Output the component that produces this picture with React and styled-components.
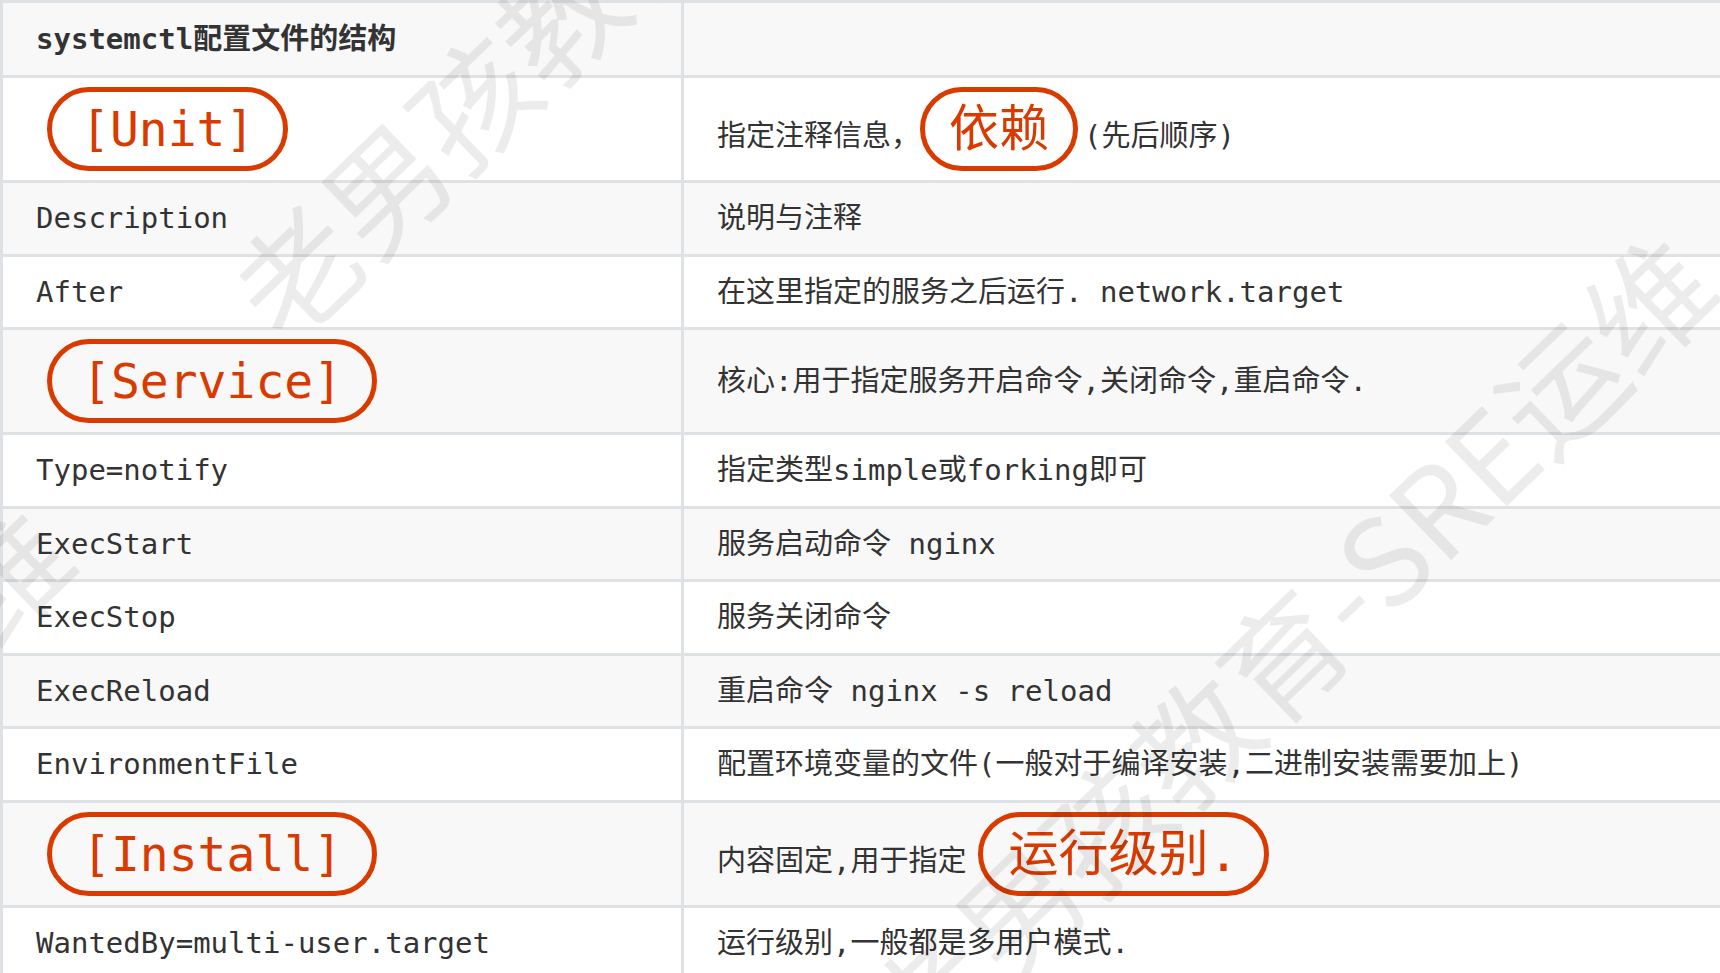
import React from 'react'
import styled, { createGlobalStyle } from 'styled-components'

const GlobalStyle = createGlobalStyle`
  html, body {
    margin: 0;
    padding: 0;
    background: #fff;
    overflow: hidden;
  }
  body {
    font-family: "DejaVu Sans Mono", "Noto Sans CJK SC", monospace;
  }
`

const RED = '#d83a00'

const Page = styled.div`
  position: relative;
  width: 1720px;
  height: 973px;
  overflow: hidden;
`

const Table = styled.div`
  display: grid;
  grid-template-columns: 678px 1fr;
  gap: 3px;
  padding: 3px 0 0 3px;
  background: #dfe2e5;
`

const Cell = styled.div`
  display: flex;
  align-items: center;
  height: ${p => p.$h}px;
  padding: 0 33px;
  background: ${p => (p.$shade ? '#f8f8f8' : '#fff')};
  color: #333;
  font-size: 29px;
  font-weight: ${p => (p.$head ? 700 : 400)};
  white-space: nowrap;
`

const Line = styled.div`
  line-height: 36px;
`

const Pill = styled.span`
  display: inline-block;
  border: 5px solid ${RED};
  border-radius: 999px;
  padding: 0 ${p => p.$pad}px;
  margin: 0 ${p => p.$mr || 0}px 0 ${p => p.$ml || 0}px;
  line-height: 74px;
  font-size: ${p => p.$size || 48}px;
  color: ${RED};
  vertical-align: baseline;
`

const Watermark = styled.div`
  position: absolute;
  left: ${p => p.$x}px;
  top: ${p => p.$y}px;
  transform-origin: 0 0;
  transform: rotate(-44deg) translateY(-50%);
  font-family: "Noto Sans CJK SC", sans-serif;
  font-size: 122px;
  line-height: 1;
  color: rgba(0, 0, 0, 0.075);
  white-space: nowrap;
  pointer-events: none;
`

const H = { head: 72, tall: 102, row: 70.5 }

const rows = [
  { kind: 'head', left: 'systemctl配置文件的结构', right: '' },
  {
    kind: 'tall',
    left: <Pill $pad={29} $ml={11}>[Unit]</Pill>,
    right: (
      <>
        指定注释信息，<Pill $pad={24} $mr={6} $size={50}>依赖</Pill>(先后顺序)
      </>
    ),
  },
  { left: 'Description', right: '说明与注释' },
  { left: 'After', right: '在这里指定的服务之后运行. network.target' },
  {
    kind: 'tall',
    left: <Pill $pad={30} $ml={11}>[Service]</Pill>,
    right: '核心:用于指定服务开启命令,关闭命令,重启命令.',
  },
  { left: 'Type=notify', right: '指定类型simple或forking即可' },
  { left: 'ExecStart', right: '服务启动命令 nginx' },
  { left: 'ExecStop', right: '服务关闭命令' },
  { left: 'ExecReload', right: '重启命令 nginx -s reload' },
  { left: 'EnvironmentFile', right: '配置环境变量的文件(一般对于编译安装,二进制安装需要加上)' },
  {
    kind: 'tall',
    left: <Pill $pad={30} $ml={11}>[Install]</Pill>,
    right: (
      <>
        内容固定,用于指定<Pill $pad={25} $ml={12} $size={50}>运行级别.</Pill>
      </>
    ),
  },
  { left: 'WantedBy=multi-user.target', right: '运行级别,一般都是多用户模式.' },
]

const App = () => {
  return (
    <Page>
      <GlobalStyle />
      <Table>
        {rows.map((r, i) => {
          const h = H[r.kind || 'row']
          const shade = i % 2 === 0
          return (
            <React.Fragment key={i}>
              <Cell $h={h} $shade={shade} $head={r.kind === 'head'}>
                <Line>{r.left}</Line>
              </Cell>
              <Cell $h={h} $shade={shade} $head={r.kind === 'head'}>
                <Line>{r.right}</Line>
              </Cell>
            </React.Fragment>
          )
        })}
      </Table>
      <Watermark $x={250} $y={311}>老男孩教育-SRE运维</Watermark>
      <Watermark $x={884} $y={1034}>老男孩教育-SRE运维</Watermark>
      <Watermark $x={-758} $y={1306}>老男孩教育-SRE运维</Watermark>
    </Page>
  )
}

export default App
